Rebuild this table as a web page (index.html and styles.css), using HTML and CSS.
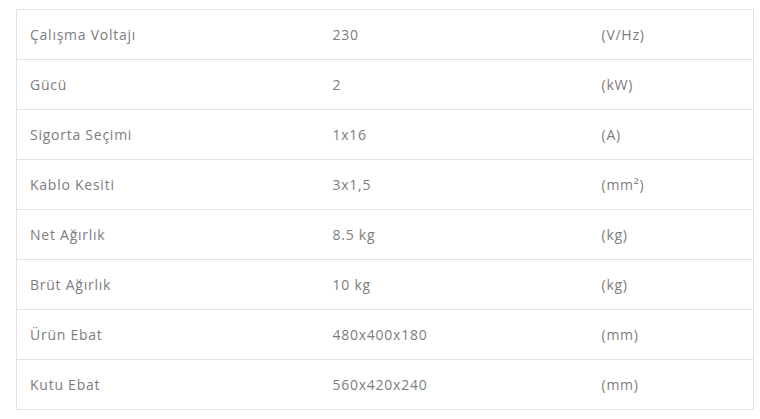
FILE: index.html
```html
<!DOCTYPE html>
<html lang="tr">
<head>
<meta charset="utf-8">
<link rel="stylesheet" href="styles.css">
</head>
<body>
<table class="specs">
<tbody>
<tr><td class="c1">Çalışma Voltajı</td><td class="c2">230</td><td class="c3">(V/Hz)</td></tr>
<tr><td class="c1">Gücü</td><td class="c2">2</td><td class="c3">(kW)</td></tr>
<tr><td class="c1">Sigorta Seçimi</td><td class="c2">1x16</td><td class="c3">(A)</td></tr>
<tr><td class="c1">Kablo Kesiti</td><td class="c2">3x1,5</td><td class="c3">(mm²)</td></tr>
<tr><td class="c1">Net Ağırlık</td><td class="c2">8.5 kg</td><td class="c3">(kg)</td></tr>
<tr><td class="c1">Brüt Ağırlık</td><td class="c2">10 kg</td><td class="c3">(kg)</td></tr>
<tr><td class="c1">Ürün Ebat</td><td class="c2">480x400x180</td><td class="c3">(mm)</td></tr>
<tr><td class="c1">Kutu Ebat</td><td class="c2">560x420x240</td><td class="c3">(mm)</td></tr>
</tbody>
</table>
</body>
</html>
```
FILE: styles.css
```css
html, body {
  margin: 0;
  padding: 0;
  background: #ffffff;
}
body {
  padding: 9px 7px 0 16px;
  font-family: "Open Sans", "Noto Sans", sans-serif;
  font-size: 14px;
  letter-spacing: 0.75px;
  color: #7d7d7d;
}
.specs {
  width: 738px;
  border-collapse: collapse;
  border: 1px solid #e2e2e2;
}
.specs td {
  height: 50px;
  padding: 0 13px;
  border-top: 1px solid #e2e2e2;
  vertical-align: middle;
  box-sizing: border-box;
}
.c1 { width: 303px; }
.c2 { width: 269px; }
```
